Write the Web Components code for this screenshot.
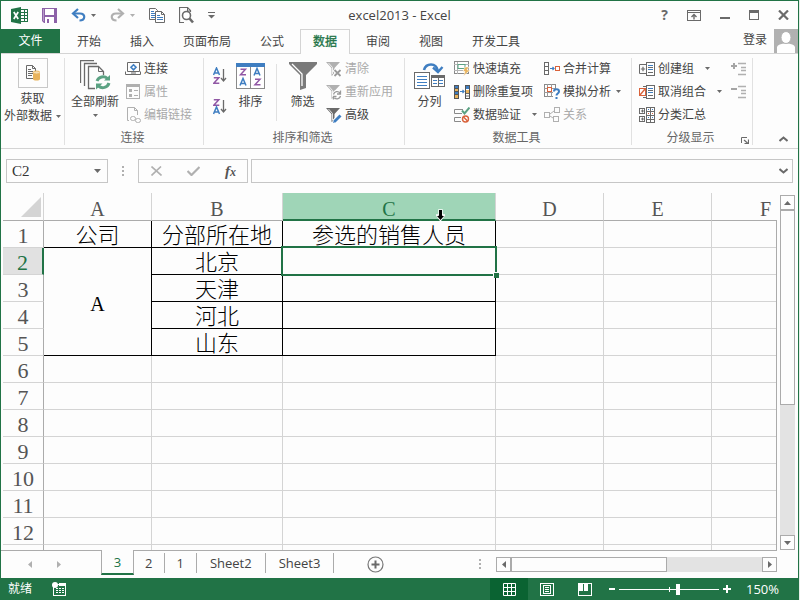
<!DOCTYPE html>
<html lang="zh-CN">
<head>
<meta charset="utf-8">
<title>excel2013 - Excel</title>
<style>
html, body { height: 100%; margin: 0; }
body { background: #e6efe9; font: 12px/16px "Open Sans", "Noto Sans CJK SC", sans-serif; color: #444; overflow: hidden; }
</style>
</head>
<body>
<xl-window>
  <xl-title-bar slot="title">excel2013 - Excel</xl-title-bar>
  <xl-tabs slot="tabs"></xl-tabs>
  <xl-ribbon slot="ribbon">
    <xl-group style="--w:64px">
      <xl-command size="large" icon="external" framed inline-caret style="--pad:3px">获取<br>外部数据</xl-command>
    </xl-group>
    <xl-group label="连接" style="--w:139px">
      <xl-command size="large" icon="refresh" caret style="--pad:6px">全部刷新</xl-command>
      <xl-stack>
        <xl-command icon="connect">连接</xl-command>
        <xl-command icon="props" disabled>属性</xl-command>
        <xl-command icon="links" disabled>编辑链接</xl-command>
      </xl-stack>
    </xl-group>
    <xl-group label="排序和筛选" style="--w:201px">
      <xl-stack style="--row:31px; --pad:8px; --top:3px">
        <xl-command icon="az" name="升序"></xl-command>
        <xl-command icon="za" name="降序"></xl-command>
      </xl-stack>
      <xl-command size="large" icon="sort" style="--pad:7px">排序</xl-command>
      <xl-divider></xl-divider>
      <xl-command size="large" icon="filter" style="--pad:8px">筛选</xl-command>
      <xl-stack>
        <xl-command icon="clear" disabled>清除</xl-command>
        <xl-command icon="reapply" disabled>重新应用</xl-command>
        <xl-command icon="advanced">高级</xl-command>
      </xl-stack>
    </xl-group>
    <xl-group label="数据工具" style="--w:227px">
      <xl-command size="large" icon="columns" style="--pad:9px">分列</xl-command>
      <xl-stack style="--width:90px">
        <xl-command icon="flash">快速填充</xl-command>
        <xl-command icon="dupes">删除重复项</xl-command>
        <xl-command icon="validate" caret style="--caret-gap:8px">数据验证</xl-command>
      </xl-stack>
      <xl-stack>
        <xl-command icon="consolidate">合并计算</xl-command>
        <xl-command icon="whatif" caret style="--caret-gap:2px">模拟分析</xl-command>
        <xl-command icon="relations" disabled>关系</xl-command>
      </xl-stack>
    </xl-group>
    <xl-group label="分级显示" launcher style="--w:121px">
      <xl-stack style="--pad:7px; --width:98px">
        <xl-command icon="group" caret style="--caret-gap:8px">创建组</xl-command>
        <xl-command icon="ungroup" caret style="--caret-gap:8px">取消组合</xl-command>
        <xl-command icon="subtotal">分类汇总</xl-command>
      </xl-stack>
      <xl-stack>
        <xl-command icon="expand" disabled name="显示明细数据"></xl-command>
        <xl-command icon="shrink" disabled name="隐藏明细数据"></xl-command>
      </xl-stack>
    </xl-group>
  </xl-ribbon>
  <xl-formula-bar slot="formula"></xl-formula-bar>
  <xl-sheet slot="sheet"></xl-sheet>
  <xl-sheet-tabs slot="sheets"></xl-sheet-tabs>
  <xl-status-bar slot="status">就绪</xl-status-bar>
</xl-window>

<script>
const G = '#6a6a6a', B = '#3f7ec1', L = '#b0b0b0';
const rect = (x, y, w, h, f, s) => `<rect x="${x}" y="${y}" width="${w}" height="${h}" fill="${f || 'none'}"${s ? ` stroke="${s}"` : ''}/>`;
const path = (d, s, w = 1, f = 'none') => `<path d="${d}" stroke="${s}" stroke-width="${w}" fill="${f}"/>`;
const glyphA = (x, y, c) => path(`M${x} ${y + 7}L${x + 3} ${y}L${x + 6} ${y + 7}M${x + 1} ${y + 5}H${x + 5}`, c, 1.5);
const glyphZ = (x, y, c) => path(`M${x} ${y + .7}H${x + 5}L${x} ${y + 6.3}H${x + 5.5}`, c, 1.5);
const smallFilter = c => path('M0 1H14L8.500 7V13L5.500 15V7Z', 'none', 0, c) + path('M2.500 2L6.500 6.500V13', '#fff', .8);

/* name: [width, height, markup] */
const ICONS = {
  excel: [17, 17, rect(9.5, 2.5, 7, 12, '#fff', '#217346') + path('M10 5.500H16M10 8.500H16M10 11.500H16M13.500 3V14', '#217346') + path('M0 2L10 0V17L0 15Z', 'none', 0, '#217346') + path('M2.800 5L7.200 12M7.200 5L2.800 12', '#fff', 1.7)],
  save: [15, 15, path('M0 0H15V15H2L0 13Z', 'none', 0, '#8d62a8') + rect(3, 1, 9, 6, '#fff') + rect(3, 9, 9, 6, '#fff') + rect(5, 11, 2, 4, '#8d62a8') + rect(1, 1, 1, 12, '#b79bc9')],
  undo: [15, 14, path('M3 5.500H9C15 5.500 14.500 12.500 8.500 12.500', B, 2.2) + path('M7 1L2 5.500L7 10', B, 2.2)],
  redo: [15, 14, path('M12 5.500H6C0 5.500 .500 12.500 6.500 12.500', L, 2.2) + path('M8 1L13 5.500L8 10', L, 2.2)],
  copy: [16, 15, path('M.500 .500H6.500L8.500 2.500V11.500H.500Z', G, 1, '#fff') + path('M2 3.500H5M2 5.500H6M2 7.500H6M2 9.500H6', B) + path('M6.500 3.500H12.500L15.500 6.500V14.500H6.500Z', G, 1, '#fff') + path('M12.500 3.500V6.500H15.500', G) + path('M8 7.500H11M8 9.500H14M8 11.500H14', B)],
  preview: [15, 17, path('M5 15.500H.500V.500H8.500L11.500 3.500V5', G, 1.2) + path('M8.500 1V4H12', G) + '<circle cx="7.5" cy="8.500" r="4" fill="#fff" stroke="#6a6a6a" stroke-width="1.6"/>' + path('M10.500 11.500L14 15.500', G, 2.6)],
  more: [7, 7, rect(0, 0, 7, 1, G) + path('M0 3H7L3.500 6.500Z', 'none', 0, G)],
  ribbonbox: [14, 11, rect(.5, .5, 13, 10, 'none', G) + rect(1, 2, 12, 1, G) + path('M7 9.500V5M4.500 7L7 4.500L9.500 7', G, 1.4)],
  min: [10, 9, rect(0, 6, 10, 2, G)],
  max: [10, 10, rect(.5, .5, 9, 9, 'none', G) + rect(0, 0, 10, 3, G)],
  close: [11, 10, path('M1 .500L10 9.500M10 .500L1 9.500', G, 2.2)],
  avatar: [24, 24, rect(0, 0, 24, 24, '#b1b1b1') + path('M3 24V18Q4 14.500 12 14.500Q20 14.500 21 18V24Z', 'none', 0, '#fff') + '<ellipse cx="12" cy="8.500" rx="5" ry="6" fill="#fff" stroke="#b1b1b1"/>'],

  external: [14, 16, path('M.500 .500H6.500L9.500 3.500V13.500H.500Z', G) + path('M6.500 .500V3.500H9.500', G) + path('M2 4.500H5M2 6.500H7M2 8.500H7M2 10.500H6', G) + path('M7 7.500V14C7 16 14 16 14 14V7.500Z', 'none', 0, '#e8b35c') + '<ellipse cx="10.5" cy="7.500" rx="3.500" ry="1.500" fill="#f7dfb4" stroke="#e8b35c"/>'],
  refresh: [31, 31, path('M.500 23V.500H14M4.500 26V3.500H17', G, 1.3) + path('M15 28.500H8.500V6.500H18.500L23.500 11.500V15', G, 1.3) + path('M18.500 7V11.500H23', G) + path('M17 21A6.500 6.500 0 0 1 27.500 18.500', '#5ba283', 3) + path('M24 20.500H30V15Z', 'none', 0, '#5ba283') + path('M29 23A6.500 6.500 0 0 1 18.500 26', '#5ba283', 3) + path('M22.500 23.500H16V29.500Z', 'none', 0, '#5ba283')],
  connect: [16, 14, path('M2.500 9.500V.500H14.500V9.500Z', G) + path('M.500 9.500V12.500H15.500V9.500', G) + path('M8.500 2.800L11 5.300L8.500 7.800L6 5.300Z', B, 1.6) + path('M6 11H11', G)],
  props: [14, 15, rect(.5, .5, 13, 14, 'none', L) + rect(0, 0, 14, 3, L) + rect(3, 5, 3, 3, L) + rect(3, 10, 3, 3, L) + path('M8 6.500H12M8 11.500H12', L)],
  links: [15, 16, path('M3 13.500H1.500V.500H8.500L11.500 3.500V8M8.500 .500V3.500H11.500', L) + rect(4.5, 9.500, 5, 4, 'none', L).replace('/>', ' rx="2"/>') + rect(9.5, 11.500, 5, 4, 'none', L).replace('/>', ' rx="2"/>')],
  az: [14, 17, glyphA(.5, 1, B) + glyphZ(.8, 10, '#9158a5') + path('M10.500 2V13.500M8 11L10.500 14L13 11', G, 1.3)],
  za: [14, 17, glyphZ(.8, 1, '#9158a5') + glyphA(.5, 9, B) + path('M10.500 2V13.500M8 11L10.500 14L13 11', G, 1.3)],
  sort: [29, 26, rect(.5, 2.5, 28, 23, '#fff', '#8a8a8a') + rect(0, 0, 29, 4, B) + rect(14, 4, 1, 21, '#8a8a8a') + glyphZ(4.500, 5.500, '#9158a5') + glyphA(4, 15.500, B) + glyphA(18, 5.500, B) + glyphZ(19, 15.500, '#9158a5')],
  filter: [28, 28, path('M0 0H28V2L17 13V26L11 28V13L0 2Z', 'none', 0, '#7a7a7a') + path('M3 2L13 12V24', '#fff', 1.3)],
  clear: [16, 16, smallFilter(L) + path('M8 8.500L15 15.500M15 8.500L8 15.500', '#fff', 4) + path('M8.500 9L14.500 15M14.500 9L8.500 15', '#999', 1.8)],
  reapply: [16, 16, smallFilter(L) + '<circle cx="11" cy="11" r="5" fill="#fff"/>' + path('M7.500 10.500A3.700 3.700 0 0 1 14 9M14.500 12A3.700 3.700 0 0 1 8.500 14M14.500 6.500V10H11M7.500 15.500V12.500H10.500', '#999', 1.3)],
  advanced: [16, 16, smallFilter(G) + path('M8 15L15 8', '#fff', 5) + path('M8.500 14.500L14.500 8.500', B, 2.8) + path('M7 16L8 13L10 15Z', 'none', 0, B)],
  columns: [31, 28, path('M10 8C12 1 22 0 24 9', B, 2.6) + path('M19 5.500L24 10L28.500 5', B, 2.4) + rect(.5, 10.500, 15, 16, '#fff', G) + path('M3 14.500H13M3 17.500H13M3 20.500H13M3 23.500H13', B) + rect(17.500, 13.500, 13, 11, '#fff', G) + rect(17, 13, 14, 3, G) + path('M19 18.500H23M25 18.500H29M19 21.500H23M25 21.500H29', B) + rect(24, 14, 1, 10, G)],
  flash: [16, 15, rect(.5, .5, 14, 12, '#fff', '#8a8a8a') + path('M0 3.500H15M0 9.500H9M3.500 1V13', '#b5b5b5') + rect(4, 3.500, 7, 4, '#fff', '#5ba283') + path('M11 6H15L13 9H16L9.500 15L11 10.500H9Z', '#fff', .5, '#e8b35c')],
  dupes: [16, 14, rect(.5, .5, 4, 13, '#555', '#555') + rect(1, 1, 3, 2, B) + rect(1, 4, 3, 2, '#e8b35c') + rect(1, 7, 3, 2, B) + rect(1, 10, 3, 3, '#e8b35c') + path('M6 6.500H10M8.500 5L10 6.500L8.500 8', B, 1.2) + rect(11.500, .5, 4, 13, '#fff', '#555') + rect(12, 1, 3, 3, B) + rect(12, 5, 3, 3, '#e8b35c') + path('M12 8.500H15M12 11H15', G)],
  validate: [16, 16, path('M9 2.500H.500V6.500H8M7 10.500H.500V14.500H7', '#8a8a8a') + path('M8 3.500L10.500 6.500L15.500 .500', '#5ba283', 2) + '<circle cx="11.500" cy="12" r="3" fill="#fff" stroke="#d9623b" stroke-width="1.400"/>' + path('M9.500 10L13.500 14', '#d9623b', 1.4)],
  consolidate: [16, 13, rect(.5, .5, 4, 12, '#fff', G) + path('M0 4.500H5M0 8.500H5', G) + path('M6 6.500H10M8.500 5L10 6.500L8.500 8', B, 1.2) + rect(11.500, 4.500, 4, 4, '#fff', '#d9623b')],
  whatif: [16, 15, rect(.5, .5, 11, 12, '#fff', '#8a8a8a') + path('M0 4.500H12M0 8.500H12M3.500 0V13M7.500 0V13', '#9a9a9a') + rect(3.500, 3.500, 4, 4, '#fff', '#d9623b') + rect(9, 5, 7, 10, '#fff') + path('M10 7.500C10 4.500 15 4.500 15 7.500C15 9.500 12.500 9.500 12.500 11.500M12.500 13V15', B, 2)],
  relations: [16, 15, rect(.5, 5.500, 5, 5, 'none', L) + rect(10.500, .5, 5, 5, 'none', L) + rect(9.500, 9.500, 5, 5, 'none', L) + path('M6 7L10 4M6 9L9 11', L)],
  group: [16, 14, path('M7 2.500H.500V11.500H7', G) + path('M1.800 7H6.200M4 4.800V9.200', G, 1.2) + rect(7.500, .5, 8, 13, '#fff', G) + path('M9 3.500H14M9 7.500H14', B) + path('M9 5.500H14M9 10.500H14', G)],
  ungroup: [16, 14, path('M4 1.500H7M4 12.500H7', G) + rect(.5, 3.500, 6, 7, '#fff', '#d9623b') + path('M1 10L6 4', '#d9623b', 1.4) + rect(7.500, .5, 8, 13, '#fff', G) + path('M9 3.500H14M9 7.500H14', B) + path('M9 5.500H14M9 10.500H14', G)],
  subtotal: [16, 16, rect(.5, 1.500, 5, 5, 'none', G) + rect(.5, 9.500, 5, 5, 'none', G) + path('M2 4H5M3.500 2.500V5.500M2 12H5M3.500 10.500V13.500', G) + rect(7.500, .5, 8, 15, '#fff', G) + path('M7 4.500H16M7 8.500H16M7 12.500H16M11.500 0V16', G) + rect(9, 2, 1, 1, B) + rect(13, 2, 1, 1, B) + rect(9, 6, 1, 1, '#d9623b') + rect(13, 6, 1, 1, '#d9623b') + rect(9, 10, 1, 1, B) + rect(13, 10, 1, 1, B)],
  expand: [15, 14, path('M0 4H6M3 1V7', '#a5a5a5', 2) + path('M7 1.500H15M10 5.500H15M10 8.500H15M7 12.500H15', L, 1.3)],
  shrink: [15, 14, path('M0 4H6', '#a5a5a5', 2) + path('M7 1.500H15M10 5.500H15M10 8.500H15M7 12.500H15', L, 1.3)],
  launcher: [8, 7, path('M.500 6V.500H6', G) + path('M3 3L7 6.500', G, 1.2) + path('M7.500 2.500V6.500H3.500', G, 1.2)],
  chevron: [9, 6, path('M.500 5L4.500 1.500L8.500 5', G, 2)],
  chevdown: [9, 6, path('M.500 1L4.500 4.500L8.500 1', G, 2)],
  caret: [5, 3, path('M0 0H5L2.500 3Z', 'none', 0, G)],
  bigcaret: [7, 4, path('M0 0H7L3.500 4Z', 'none', 0, G)],
  lightcaret: [5, 3, path('M0 0H5L2.500 3Z', 'none', 0, L)],
  up: [7, 4, path('M0 4H7L3.500 0Z', 'none', 0, G)],
  left: [4, 7, path('M4 0V7L0 3.500Z', 'none', 0, G)],
  right: [4, 7, path('M0 0V7L4 3.500Z', 'none', 0, G)],
  leftlight: [4, 7, path('M4 0V7L0 3.500Z', 'none', 0, L)],
  rightlight: [4, 7, path('M0 0V7L4 3.500Z', 'none', 0, L)],
  cancel: [11, 10, path('M.500 .500L10.500 9.500M10 .500L.500 9.500', L, 1.6)],
  ok: [13, 10, path('M.500 5L4.500 9L12.500 1', L, 2.2)],
  dots: [2, 11, rect(0, 0, 2, 2, L) + rect(0, 4, 2, 2, L) + rect(0, 8, 2, 2, L)],
  add: [17, 17, '<circle cx="8.500" cy="8.500" r="7.500" fill="none" stroke="#777" stroke-width="1.200"/>' + path('M4.500 8.500H12.500M8.500 4.500V12.500', G, 2)],
  corner: [20, 20, path('M0 20L20 0V20Z', 'none', 0, '#d4d4d4')],
  pointer: [9, 13, path('M3 1H6V6H8.500L4.500 11.500L.500 6H3Z', '#fff', 1.5, '#000') + path('M3 1H6V7H8L4.500 11L1 7H3Z', 'none', 0, '#000')],
  macro: [14, 14, rect(1.500, 2.500, 12, 11, 'none', '#fff') + rect(7, 1, 7, 3, '#fff') + path('M4 6.500H12M4 8.500H12M4 10.500H12', '#fff', 1, 'none').replace('/>', ' stroke-dasharray="2 1"/>') + '<circle cx="3" cy="3" r="3" fill="#fff"/>'],
  normal: [13, 13, path('M.500 .500H12.500V12.500H.500ZM4.500 0V13M8.500 0V13M0 4.500H13M0 8.500H13', '#fff')],
  layout: [14, 13, rect(.5, .5, 13, 12, 'none', '#fff') + rect(3.500, 2.500, 7, 8, 'none', '#fff') + path('M5 4.500H9M5 6.500H9M5 8.500H9', '#fff')],
  pagebreak: [14, 13, rect(.5, .5, 13, 12, 'none', '#fff') + rect(1, 0, 4, 8, '#fff') + rect(6, 0, 4, 8, '#fff')],
  minus: [6, 2, rect(0, 0, 6, 2, '#fff')],
  plus: [8, 8, path('M0 4H8M4 0V8', '#fff', 2)]
};
const BTN = 'button{font:inherit;color:inherit;background:none;border:0;padding:0;margin:0;display:flex;align-items:center;justify-content:center}';

function define(tag, render) {
  customElements.define(tag, class extends HTMLElement {
    constructor() { super(); this.attachShadow({ mode: 'open' }); }
    connectedCallback() {
      const t = document.createElement('template');
      t.innerHTML = render(this);
      this.shadowRoot.replaceChildren(t.content.cloneNode(true));
    }
  });
}
const ic = n => `<xl-icon name="${n}"></xl-icon>`;

define('xl-icon', el => {
  const [w, h, m] = ICONS[el.getAttribute('name')];
  return `<style>:host{display:block;flex:none}svg{display:block}</style><svg width="${w}" height="${h}" viewBox="0 0 ${w} ${h}" aria-hidden="true">${m}</svg>`;
});

define('xl-window', () => `<style>
:host{display:flex;flex-direction:column;height:100vh;box-sizing:border-box;margin-right:1px;background:#fdfdfd;border:solid #217346;border-width:1px 1px 0 1px}
.sheet{flex:1;min-height:0;display:flex}
::slotted([slot=sheet]){flex:1;min-width:0}
</style><slot name="title"></slot><slot name="tabs"></slot><slot name="ribbon"></slot><slot name="formula"></slot>
<div class="sheet"><slot name="sheet"></slot></div><slot name="sheets"></slot><slot name="status"></slot>`);

define('xl-title-bar', () => `<style>${BTN}
:host{display:grid;grid-template-columns:1fr auto 1fr;align-items:center;height:28px}
div{display:flex;align-items:center}
.l{padding-left:10px;gap:14px}.l .g{gap:5px}
.r{justify-content:flex-end;gap:19px;padding-right:9px}
h1{font:13px/18px "Open Sans","Noto Sans CJK SC",sans-serif;margin:0}
.q{font:bold 14px/18px "Open Sans",sans-serif;color:#6a6a6a}
</style>
<div class="l">${ic('excel')}<button aria-label="保存">${ic('save')}</button>
<div class="g"><button aria-label="撤消">${ic('undo')}</button><button aria-label="撤消列表">${ic('caret')}</button></div>
<div class="g"><button aria-label="恢复">${ic('redo')}</button><button aria-label="恢复列表">${ic('lightcaret')}</button></div>
<button aria-label="复制">${ic('copy')}</button><button aria-label="打印预览">${ic('preview')}</button><button aria-label="自定义">${ic('more')}</button></div>
<h1><slot></slot></h1>
<div class="r"><button class="q">?</button><button aria-label="功能区显示选项">${ic('ribbonbox')}</button><button aria-label="最小化">${ic('min')}</button><button aria-label="最大化">${ic('max')}</button><button aria-label="关闭">${ic('close')}</button></div>`);

define('xl-tabs', () => `<style>${BTN}
:host{display:flex;height:25px;box-sizing:border-box;border-bottom:1px solid #d4d4d4}
nav{display:flex;gap:3px}
nav button{padding:0 12px;border:1px solid transparent;border-bottom:0;height:24px;white-space:nowrap}
nav .file{background:#217346;color:#fff;padding:0 17px;margin-right:1px;border:0;width:59px}
nav .on{border-color:#d4d4d4;color:#217346;background:#fdfdfd;height:25px;padding-bottom:1px;-webkit-text-stroke:.3px}
.user{margin-left:auto;display:flex;align-items:center;gap:7px}
.user button{padding-bottom:2px}
</style><nav><button class="file">文件</button><button>开始</button><button>插入</button><button>页面布局</button><button>公式</button><button class="on">数据</button><button>审阅</button><button>视图</button><button>开发工具</button></nav>
<div class="user"><button>登录</button>${ic('avatar')}</div>`);

define('xl-ribbon', () => `<style>${BTN}
:host{display:flex;height:95px;box-sizing:border-box;border-bottom:1px solid #d4d4d4;padding:4px 0}
button{margin:auto 10px 2px auto}
</style><slot></slot><button aria-label="折叠功能区">${ic('chevron')}</button>`);

define('xl-group', el => `<style>${BTN}
:host{display:flex;flex-direction:column;flex:none;box-sizing:border-box;width:var(--w);border-right:1px solid #e1e1e1;height:87px}
.c{display:flex;height:71px;flex:none}
.f{display:grid;grid-template-columns:1fr auto 1fr;align-items:center;height:18px;flex:none;color:#666;padding-right:3px}
.f span{grid-column:2}.f button{justify-self:end;align-self:end;margin-bottom:3px}
</style><div class="c"><slot></slot></div><div class="f"><span>${el.getAttribute('label') || ''}</span>${el.hasAttribute('launcher') ? `<button aria-label="分级显示设置">${ic('launcher')}</button>` : ''}</div>`);

define('xl-stack', () => `<style>
:host{display:grid;grid-auto-rows:var(--row,23px);align-content:start;width:var(--width,auto);box-sizing:border-box;padding:var(--top,0) 0 0 var(--pad,0);margin-top:-1px}
</style><slot></slot>`);

define('xl-divider', () => `<style>:host{display:block;width:1px;background:#e1e1e1;margin:6px 2px 8px 3px}</style>`);

define('xl-command', el => {
  const large = el.getAttribute('size') === 'large', name = el.getAttribute('name'), icon = el.getAttribute('icon');
  const label = name ? ` aria-label="${name}"` : '', off = el.hasAttribute('disabled') ? ' disabled' : '';
  if (large) return `<style>${BTN}
:host{display:block}
button{flex-direction:column;justify-content:flex-start;padding:0 var(--pad,3px);height:70px;line-height:17px;white-space:nowrap}
.i{height:35px;display:grid;place-items:center;width:31px}
.framed{width:28px;height:28px;border:1px solid #c8c8c8;margin-bottom:2px}
.t xl-icon{display:inline-block;vertical-align:middle;margin-left:4px}
.v{margin-top:4px}
</style><button${off}><span class="i${el.hasAttribute('framed') ? ' framed' : ''}">${ic(icon)}</span><span class="t"><slot></slot>${el.hasAttribute('inline-caret') ? ic('caret') : ''}</span>${el.hasAttribute('caret') ? `<span class="v">${ic('caret')}</span>` : ''}</button>`;
  return `<style>${BTN}
:host{display:flex;align-items:center}
button{gap:3px;white-space:nowrap}button:disabled{color:#aaa}
.i{width:16px;height:18px;display:grid;place-items:center}
.k{margin-left:var(--caret-gap,4px)}
</style><button${off}${label}><span class="i">${ic(icon)}</span>${name ? '' : '<span><slot></slot></span>'}${el.hasAttribute('caret') ? `<span class="k">${ic('caret')}</span>` : ''}</button>`;
});

define('xl-formula-bar', () => `<style>${BTN}
:host{display:flex;align-items:center;height:44px;box-sizing:border-box;padding:0 5px}
.b{display:flex;align-items:center;height:24px;box-sizing:border-box;border:1px solid #c6c6c6}
input{border:0;background:none;outline:0;padding:0;min-width:0;flex:1;color:#333;font:15px/20px "Liberation Serif","Noto Sans CJK SC",serif}
.n{width:102px;padding:0 6px 0 5px}
.d{margin:0 14px 0 14px}
.f{width:110px;justify-content:space-between;padding:0 11px 0 12px;margin-right:3px}
.x{flex:1;padding:0 4px}
i{font:italic bold 15px/16px "Liberation Serif",serif;color:#555}i small{font-size:12px}
</style><div class="b n"><input aria-label="名称框" value="C2"><button aria-label="名称列表">${ic('bigcaret')}</button></div><span class="d">${ic('dots')}</span>
<div class="b f"><button aria-label="取消">${ic('cancel')}</button><button aria-label="输入">${ic('ok')}</button><button aria-label="插入函数"><i>f<small>x</small></i></button></div>
<div class="b x"><input aria-label="编辑栏"><button aria-label="展开编辑栏">${ic('chevdown')}</button></div>`);

define('xl-scrollbar', el => {
  const v = el.hasAttribute('vertical');
  return `<style>${BTN}
:host{display:flex;flex-direction:${v ? 'column' : 'row'};${v ? 'width' : 'height'}:15px;background:#e3e3e3}
button,.t{box-sizing:border-box;border:1px solid #ababab;background:#fdfdfd}
button{flex:none;width:15px;height:15px}
.r{flex:1;display:flex;flex-direction:inherit}.t{flex:none;${v ? 'height' : 'width'}:${v ? '60%' : '62%'}}
</style><button aria-label="后退">${ic(v ? 'up' : 'left')}</button><div class="r"><div class="t"></div></div><button aria-label="前进">${ic(v ? 'bigcaret' : 'right')}</button>`;
});

define('xl-sheet', () => {
  const cities = ['北京', '天津', '河北', '山东'], rest = '<td></td><td></td><td></td>';
  let body = `<tr><th scope="row">1</th><td class="k">公司</td><td class="k">分部所在地</td><td class="k">参选的销售人员</td>${rest}</tr>`;
  cities.forEach((c, i) => body += `<tr><th scope="row"${i ? '' : ' class="on"'}>${i + 2}</th>${i ? '' : '<td class="k" rowspan="4">A</td>'}<td class="k">${c}</td><td class="k${i ? '' : ' sel'}"></td>${rest}</tr>`);
  for (let r = 6; r < 14; r++) body += `<tr><th scope="row">${r < 13 ? r : ''}</th><td></td><td></td><td></td>${rest}</tr>`;
  return `<style>
:host{display:flex;gap:3px;padding:0 3px 0 2px}
.v{flex:1;min-width:0;overflow:hidden;position:relative}
.v::after{content:"";position:absolute;right:0;top:27px;bottom:0;width:1px;background:#ababab}
table{table-layout:fixed;border-collapse:separate;border-spacing:0;width:817px;font:22px/24px "Liberation Serif","Noto Sans CJK SC",serif;font-weight:300;color:#000}
td,th{box-sizing:border-box;height:27px;padding:4px 0 0;text-align:center;border:solid #d4d4d4;border-width:0 1px 1px 0;font-weight:300;white-space:nowrap;line-height:22px}
th{color:#555}
thead th{height:28px;border-bottom-color:#ababab;font-size:20px}
tbody th{border-right-color:#ababab}
td.k{border-color:#000}
td[rowspan]{font-size:20px}
thead .on{background:#9fd5b7;color:#217346;border-bottom:2px solid #217346;line-height:20px;padding-top:6px}
tbody .on{background:#e1e1e1;color:#217346;border-right:2px solid #217346}
thead .c{vertical-align:bottom;padding:0 0 3px 18px}
.sel{position:relative}
.sel::before{content:"";position:absolute;inset:-2px;border:2px solid #217346}
.sel::after{content:"";position:absolute;right:-4px;bottom:-4px;width:5px;height:5px;background:#217346;border:solid #fdfdfd;border-width:1px 0 0 1px}
.p{position:absolute;left:433px;top:16px}
xl-scrollbar{margin-top:2px}
</style><div class="v"><table><colgroup><col style="width:41px"><col style="width:108px"><col style="width:131px"><col style="width:213px"><col style="width:108px"><col style="width:108px"><col style="width:108px"></colgroup>
<thead><tr><th class="c">${ic('corner')}</th><th scope="col">A</th><th scope="col">B</th><th scope="col" class="on">C</th><th scope="col">D</th><th scope="col">E</th><th scope="col">F</th></tr></thead><tbody>${body}</tbody></table><div class="p">${ic('pointer')}</div></div><xl-scrollbar vertical></xl-scrollbar>`;
});

define('xl-sheet-tabs', () => `<style>${BTN}
:host{display:flex;height:28px;font:13px/18px "Open Sans",sans-serif;padding-right:21px}
.a,.z{border-top:1px solid #ababab;display:flex;align-items:center}
.a{width:100px;box-sizing:border-box;gap:25px;padding-left:27px}
.z{flex:1}
.on{width:33px;height:25px;box-sizing:border-box;border:solid #ababab;border-width:0 1px;border-bottom:2px solid #217346;color:#217346}
.s{height:20px;margin-top:-4px;padding:0 13px;border-right:1px solid #ababab}
.s.n{padding:0 12px 0 11px}
.add{margin-left:33px}.d{margin-left:auto;margin-right:15px}
xl-scrollbar{width:281px}
</style><div class="a"><button aria-label="上一个工作表">${ic('leftlight')}</button><button aria-label="下一个工作表">${ic('rightlight')}</button></div><button class="on">3</button>
<div class="z"><button class="s n">2</button><button class="s n">1</button><button class="s">Sheet2</button><button class="s">Sheet3</button><button class="add" aria-label="新工作表">${ic('add')}</button><span class="d">${ic('dots')}</span><xl-scrollbar></xl-scrollbar></div>`);

define('xl-status-bar', () => `<style>${BTN}
:host{display:flex;align-items:center;height:22px;background:#217346;color:#fff;padding:0 21px 0 7px;margin-right:-1px}
.m{margin-left:20px}.v{display:flex;margin-left:auto}
.v button{width:38px;height:22px}.v .on{background:#0a6332}
.z{display:flex;align-items:center;gap:4px;margin-left:5px}
input{appearance:none;width:100px;height:12px;margin:0;background:linear-gradient(#fff,#fff) 0 50%/100% 1px no-repeat,linear-gradient(#fff,#fff) 50% 50%/1px 5px no-repeat}
input::-webkit-slider-thumb{appearance:none;width:4px;height:11px;background:#fff;border-radius:0}
output{font:13px/18px "Open Sans",sans-serif;margin-left:15px;width:32px;text-align:right}
</style><slot></slot><button class="m" aria-label="录制宏">${ic('macro')}</button>
<div class="v"><button class="on" aria-label="普通">${ic('normal')}</button><button aria-label="页面布局">${ic('layout')}</button><button aria-label="分页预览">${ic('pagebreak')}</button></div>
<div class="z"><button aria-label="缩小">${ic('minus')}</button><input type="range" min="0" max="100" value="59" aria-label="显示比例"><button aria-label="放大">${ic('plus')}</button></div><output>150%</output>`);
</script>
</body>
</html>
